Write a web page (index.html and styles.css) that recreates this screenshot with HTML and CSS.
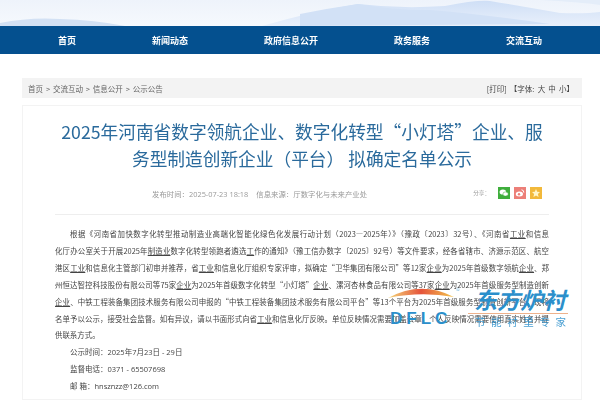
FILE: index.html
```html
<!DOCTYPE html>
<html lang="zh-CN">
<head>
  <meta charset="UTF-8" />
  <title>公示公告</title>
  <link rel="stylesheet" href="styles.css">
</head>
<body>

  <div class="banner">
    <svg class="hills" viewBox="0 0 600 26" preserveAspectRatio="none">
      <defs>
        <linearGradient id="hillFade" x1="0" y1="0" x2="0" y2="1">
          <stop offset="0" stop-color="#cfdff6" />
          <stop offset="1" stop-color="#e9f0fb" />
        </linearGradient>
      </defs>
      <path d="M0 23 Q30 17 60 19 Q95 20 125 26 L0 26Z" fill="#d3e1f4" />
      <path d="M262 26 Q310 12 358 4 Q400 9 445 6 Q475 0 490 1 Q520 6 560 13 Q585 14 600 12 L600 26Z" fill="url(#hillFade)" />
      <path d="M300 14 Q330 8 358 4 Q390 10 430 10 Q480 14 550 24 L300 26Z" fill="#d2e1f6" />
      <path d="M540 0 Q580 2 600 5 L600 0Z" fill="#e4edf9" />
    </svg>
  </div>

  <nav class="nav">
    <a>首页</a>
    <a>新闻动态</a>
    <a>政府信息公开</a>
    <a>政务服务</a>
    <a>交流互动</a>
  </nav>

  <div class="crumb">
    <span class="path">首页 &gt; 交流互动 &gt; 信息公开 &gt; 公示公告</span>
    <span class="tools">[打印] 【字体: 大 中 小】</span>
  </div>

  <div class="article">
    <h1>2025年河南省数字领航企业、数字化转型“小灯塔”企业、服务型制造创新企业（平台） 拟确定名单公示</h1>

    <div class="meta">
      <div class="source">
        <span>发布时间：2025-07-23 18:18</span>
        <span>信息来源：厅数字化与未来产业处</span>
      </div>
      <div class="share">
        <span class="share-label">分享：</span>
        <span class="share-btn wechat">
          <svg viewBox="0 0 12 12"><ellipse cx="4.9" cy="5" rx="3.3" ry="2.6" fill="#fff" /><ellipse cx="7.6" cy="7" rx="2.7" ry="2.1" fill="#fff" stroke="#3fae3c" stroke-width=".5" /></svg>
        </span>
        <span class="share-btn weibo">
          <svg viewBox="0 0 12 12"><ellipse cx="5.4" cy="7" rx="3.6" ry="2.5" fill="#fff" /><circle cx="5" cy="7.2" r="1.2" fill="#ec7f78" /><path d="M7.5 2.8 Q10 3 9.8 5.6" fill="none" stroke="#fff" /></svg>
        </span>
        <span class="share-btn star">
          <svg viewBox="0 0 12 12"><path d="M6 2 L7.2 4.8 L10 5 L7.9 7 L8.6 10 L6 8.4 L3.4 10 L4.1 7 L2 5 L4.8 4.8Z" fill="#fff6c8" /></svg>
        </span>
      </div>
    </div>

    <div class="content">
      <p class="row indent">根据《河南省加快数字化转型推动制造业高端化智能化绿色化发展行动计划（2023—2025年）》（豫政〔2023〕32号）、《河南省<u>工业</u>和信息</p>
      <p class="row">化厅办公室关于开展2025年<u>制造业</u>数字化转型领跑者遴选<u>工</u>作的通知》（豫工信办数字〔2025〕92号）等文件要求，经各省辖市、济源示范区、航空</p>
      <p class="row">港区<u>工业</u>和信息化主管部门初审并推荐，省<u>工业</u>和信息化厅组织专家评审，拟确定“卫华集团有限公司”等12家<u>企业</u>为2025年首级数字领航<u>企业</u>、郑</p>
      <p class="row">州恒达智控科技股份有限公司等75家<u>企业</u>为2025年首级数字化转型“小灯塔”<u>企业</u>、漯河杏林食品有限公司等37家<u>企业</u>为2025年首级服务型制造创新</p>
      <p class="row"><u>企业</u>、中铁工程装备集团技术服务有限公司申报的“中铁工程装备集团技术服务有限公司平台”等13个平台为2025年首级服务型制造创新平台。现将</p>
      <p class="row">名单予以公示，接受社会监督。如有异议，请以书面形式向省<u>工业</u>和信息化厅反映。单位反映情况需要加盖公章，个人反映情况需要使用真实姓名并提</p>
      <p>供联系方式。</p>
      <p class="indent contact">公示时间：2025年7月23日 - 29日</p>
      <p class="indent contact">监督电话：0371 - 65507698</p>
      <p class="indent contact">邮 箱：hnsznzz@126.com</p>
    </div>
  </div>

  <!-- watermark sits over the article -->
  <div class="watermark">
    <svg class="wm-arc" viewBox="0 0 66 10">
      <defs>
        <linearGradient id="arcFill" x1="0" y1="0" x2="1" y2="0">
          <stop offset="0" stop-color="#f4d77a" />
          <stop offset=".5" stop-color="#e5533a" />
          <stop offset="1" stop-color="#f2c64e" />
        </linearGradient>
      </defs>
      <path d="M0 10 Q33 -8 66 9 Q33 3 0 10Z" fill="url(#arcFill)" />
    </svg>
    <span class="wm-reg">®</span>
    <span class="wm-name">东方炉衬</span>
    <span class="wm-rule"></span>
    <span class="wm-latin">DFLC</span>
    <span class="wm-slogan">节能衬里专家</span>
  </div>

</body>
</html>
```

FILE: styles.css
```css
html {
  overflow: hidden;
}

body {
  margin: 0;
  background: #fff;
  font-family: "Noto Sans CJK SC", "Open Sans", sans-serif;
  color: #555;
}

.banner {
  height: 26px;
  background: linear-gradient(to bottom, #eef3fb, #f6f9fd);
}

.hills {
  display: block;
  width: 100%;
  height: 26px;
}

.nav {
  display: flex;
  gap: 76px;
  height: 28px;
  padding-left: 58px;
  align-items: center;
  background: #04508f;
  color: #fff;
  font-size: 9px;
  font-weight: bold;
  filter: blur(0.3px);
}

.crumb {
  display: flex;
  justify-content: space-between;
  align-items: center;
  height: 20px;
  margin: 24px 18px 0 22px;
  padding: 0 8px 0 6px;
  background: #f3f3f3;
  font-size: 7.5px;
  color: #666;
}

.path {
  word-spacing: 1.2px;
  filter: blur(0.3px);
}

.tools {
  color: #444;
  word-spacing: 1.5px;
  filter: blur(0.3px);
}

.article {
  position: relative;
  height: 295px;
  margin: 7px 18px 0 22px;
  padding: 0 32px 0 32px;
  border: 1px solid #f3f3f3;
  box-sizing: border-box;
}

h1 {
  margin: 0;
  padding-top: 12px;
  font-size: 17.7px;
  line-height: 27px;
  font-weight: normal;
  text-align: center;
  color: #2a6a9c;
  filter: blur(0.3px);
}

.meta {
  display: flex;
  justify-content: space-between;
  align-items: center;
  height: 42px;
  padding-left: 97px;
  padding-right: 7px;
  border-bottom: 1px solid #eee;
  font-family: "Open Sans", "Noto Sans CJK SC", sans-serif;
  font-size: 7.4px;
  color: #999;
}

.source {
  display: flex;
  gap: 8px;
  filter: blur(0.3px);
}

.share {
  display: flex;
  align-items: center;
  gap: 4px;
}

.share-label {
  font-size: 5.6px;
  margin-right: 4px;
  filter: blur(0.3px);
}

.share-btn {
  display: block;
  width: 12px;
  height: 12px;
}

.share-btn svg {
  display: block;
}

.wechat {
  background: #3fae3c;
}

.weibo {
  background: #ec7f78;
}

.star {
  background: #f2b93b;
}

.content {
  padding-top: 11px;
  font-size: 7.45px;
  line-height: 16.9px;
  color: #444;
  filter: blur(0.35px);
}

.content p {
  margin: 0;
  white-space: nowrap;
}

.content u {
  text-underline-offset: 1px;
}

.content .row {
  text-align: justify;
  text-align-last: justify;
  white-space: normal;
}

.content .indent {
  text-indent: 15px;
}

.content .contact {
  font-family: "Open Sans", "Noto Sans CJK SC", sans-serif;
  font-size: 7.5px;
}

.watermark {
  position: absolute;
  left: 388px;
  top: 286px;
  width: 182px;
  height: 42px;
  color: #2b8fcb;
}

.wm-arc {
  position: absolute;
  left: 0;
  top: 2px;
  width: 66px;
  height: 10px;
}

.wm-reg {
  position: absolute;
  left: 68px;
  top: 0;
  font-size: 8px;
  line-height: 10px;
  opacity: 0.5;
}

.wm-name {
  position: absolute;
  left: 86px;
  top: 0;
  font-size: 23px;
  line-height: 26px;
  font-weight: bold;
  font-style: italic;
  white-space: nowrap;
}

.wm-rule {
  position: absolute;
  left: 80px;
  top: 27px;
  width: 100px;
  height: 1px;
  background: #eeb28c;
}

.wm-latin {
  position: absolute;
  left: 2px;
  top: 26px;
  font-family: "Liberation Sans", sans-serif;
  font-size: 17px;
  line-height: 14px;
  font-weight: bold;
  letter-spacing: 4px;
}

.wm-slogan {
  position: absolute;
  left: 87px;
  top: 30px;
  font-size: 10.5px;
  line-height: 12px;
  letter-spacing: 5.6px;
  white-space: nowrap;
  opacity: 0.85;
}
```
